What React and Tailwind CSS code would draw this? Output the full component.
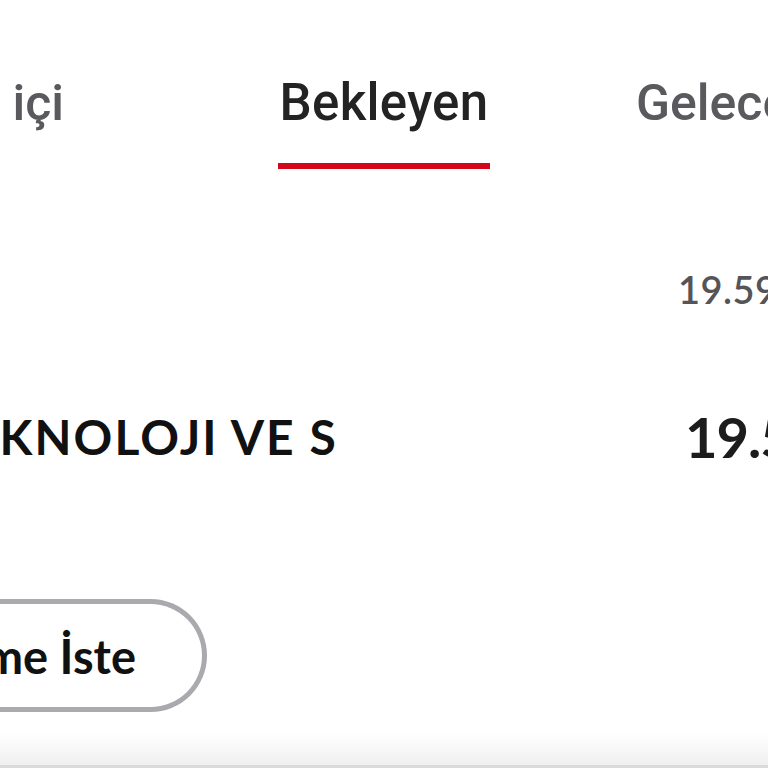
import React from "react";

const tabs = [
  { title: "Dönem içi", active: false },
  { title: "Bekleyen", active: true },
  { title: "Gelecek", active: false },
];

export default function App() {
  return (
    <div className="w-[768px] h-[768px] overflow-hidden bg-white flex flex-col" style={{ fontFamily: "Lato, 'Noto Sans', sans-serif" }}>
      {/* tabs */}
      <div className="flex pt-[73px] whitespace-nowrap" style={{ fontFamily: "Roboto, 'Liberation Sans', sans-serif" }}>
        <div className="w-[64px] shrink-0 flex justify-end">
          <span className="text-[50px] leading-[60px] font-medium text-[#5a5a5e]">{tabs[0].title}</span>
        </div>
        <div className="ml-[214px] w-[212px] shrink-0 flex flex-col items-center">
          <span className="text-[51px] leading-[60px] font-medium tracking-[0.3px] text-[#232323]">{tabs[1].title}</span>
          <div className="mt-[30px] h-[6px] w-[212px] bg-[#d6061a]" />
        </div>
        <div className="ml-[146px] shrink-0">
          <span className="text-[50px] leading-[60px] font-medium text-[#5a5a5e]">{tabs[2].title}</span>
        </div>
      </div>

      {/* pending item */}
      <div className="mt-[98px] pl-[678px] whitespace-nowrap">
        <span className="text-[38px] leading-[44px] font-semibold tracking-[0.5px] text-[#555559]">19.59 TL</span>
      </div>

      <div className="mt-[98px] flex items-center whitespace-nowrap">
        <div className="w-[338px] shrink-0 flex justify-end">
          <span className="text-[48px] leading-[56px] font-bold tracking-[2.1px] text-[#111]">TEKNOLOJI VE S</span>
        </div>
        <span className="ml-[347px] text-[56px] leading-[56px] font-bold tracking-[-1px] text-[#1c1c1c]">19.59 TL</span>
      </div>

      {/* action button */}
      <div className="mt-[134px] flex">
        <div className="w-[207px] h-[113px] shrink-0 flex items-center justify-end pr-[66px] border-[5px] border-l-0 border-[#a9a9ae] rounded-r-full whitespace-nowrap">
          <span className="text-[47px] leading-[56px] font-bold text-[#111]">Ödeme İste</span>
        </div>
      </div>

      <div className="mt-auto h-[34px] bg-gradient-to-b from-white to-[#efefef] border-b-[3px] border-[#dadada]" />
    </div>
  );
}
